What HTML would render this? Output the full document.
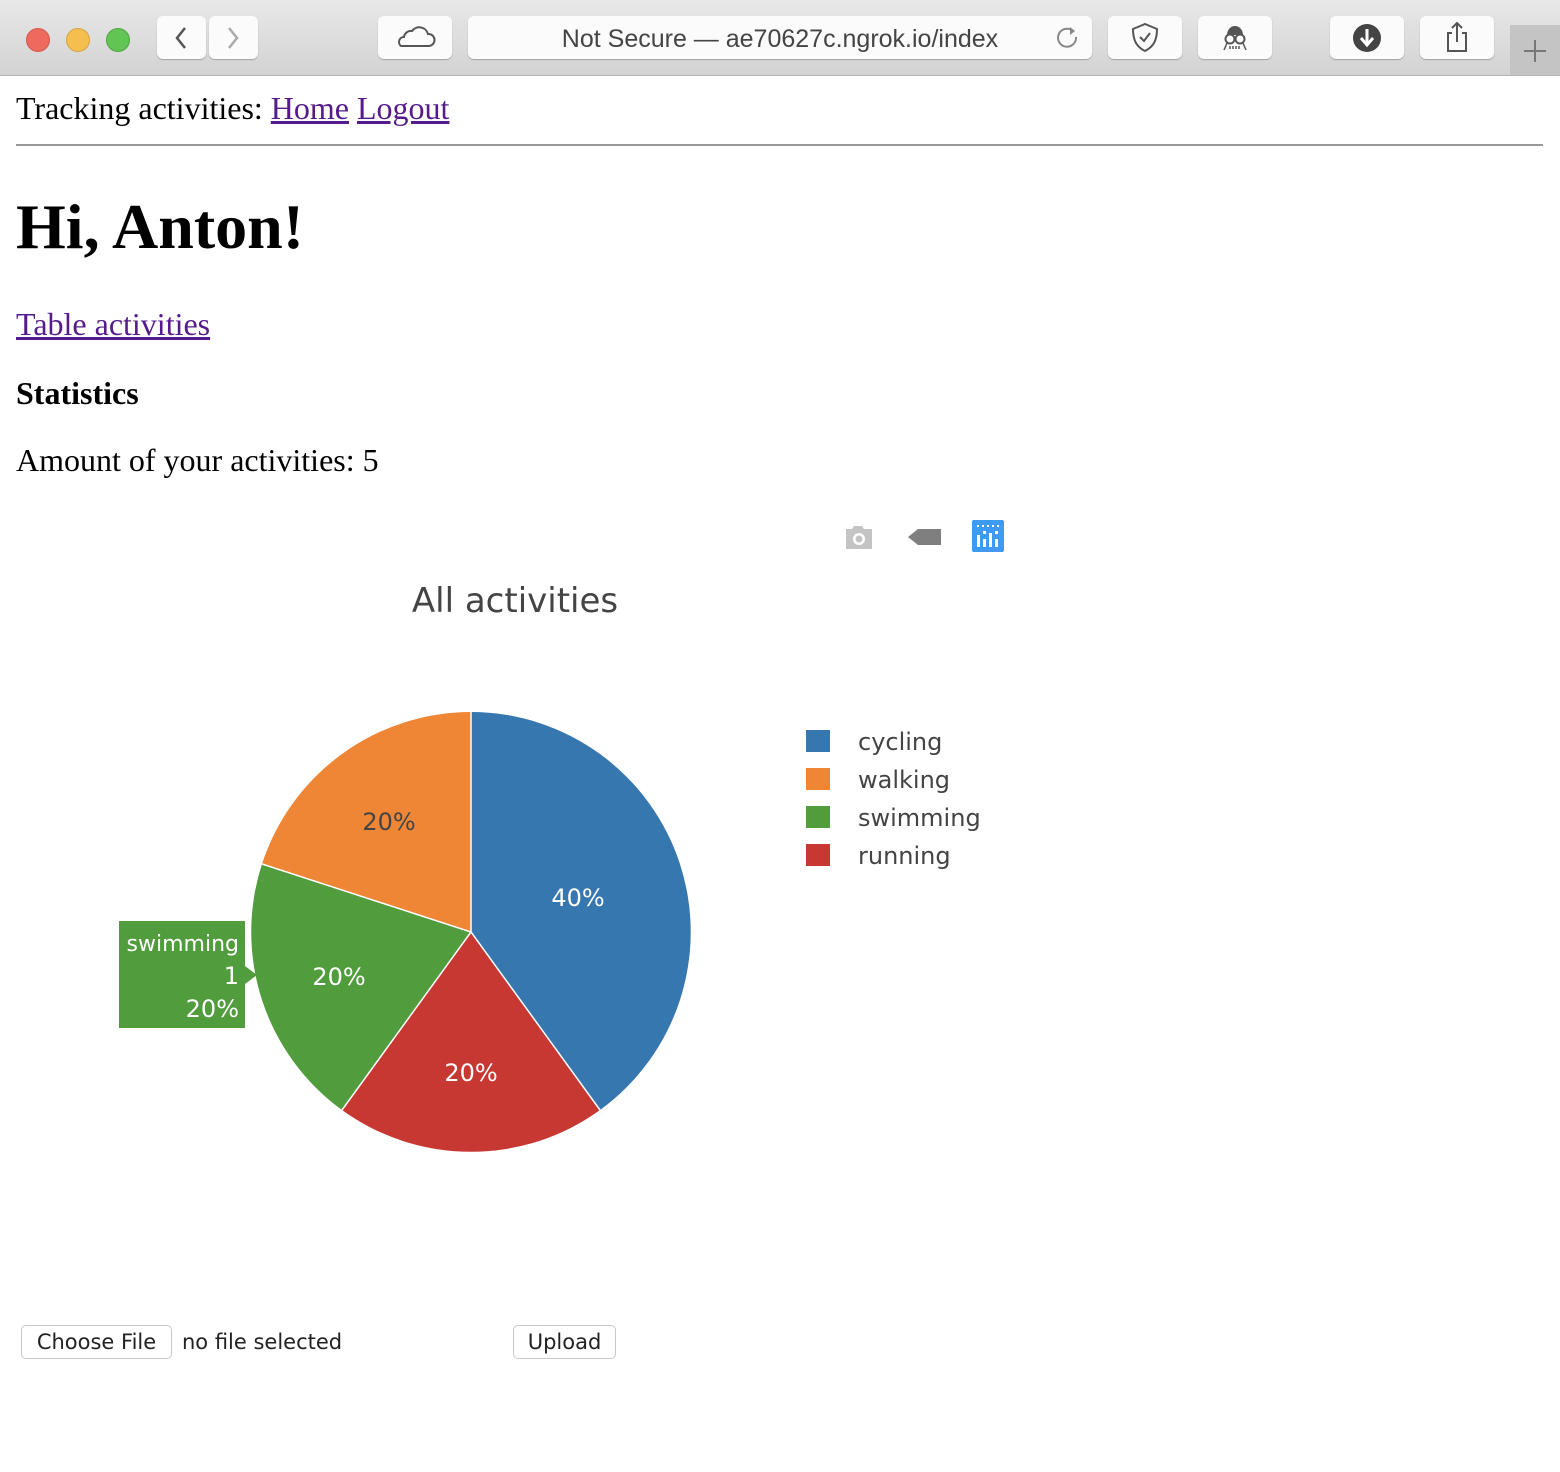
<!DOCTYPE html>
<html><head><style>
body{margin:0;width:1560px;height:1472px;background:#fff;position:relative;overflow:hidden;font-family:"Liberation Serif",serif}
.tb{position:absolute;left:0;top:0;width:1560px;height:75px;background:linear-gradient(#e8e8e8,#d3d3d3);border-bottom:1px solid #b5b5b5}
.btn{position:absolute;top:16px;height:43px;background:#fbfbfb;border-radius:6px;box-shadow:0 1px 1px rgba(0,0,0,.25)}
.dot{position:absolute;top:28px;width:24px;height:24px;border-radius:50%}
.s{font-family:"DejaVu Sans",sans-serif}
a{color:#551a8b}
</style></head><body>
<div class="tb">
<div class="dot" style="left:26px;background:#ee6a5e;border:1px solid #d5574c;width:22px;height:22px"></div>
<div class="dot" style="left:66px;background:#f5bf4f;border:1px solid #d9a33c;width:22px;height:22px"></div>
<div class="dot" style="left:106px;background:#61c454;border:1px solid #4ea83f;width:22px;height:22px"></div>
<div class="btn" style="left:157px;width:49px"><svg width="49" height="43"><path d="M28 12 L20 22 L28 32" stroke="#555" stroke-width="2.5" fill="none"/></svg></div>
<div class="btn" style="left:209px;width:49px"><svg width="49" height="43"><path d="M20 12 L28 22 L20 32" stroke="#aaa" stroke-width="2.5" fill="none"/></svg></div>
<div class="btn" style="left:378px;width:74px"><svg width="74" height="43"><path d="M23 30 H51 A6 6 0 0 0 50 18 A9 9 0 0 0 34 15 A7 7 0 0 0 26 21 A5 5 0 0 0 23 30Z" stroke="#555" stroke-width="2" fill="none"/></svg></div>
<div class="btn" style="left:468px;width:624px"><div style="position:absolute;left:0;right:0;top:9px;text-align:center;font-family:'Liberation Sans',sans-serif;font-size:25px;color:#444">Not Secure — ae70627c.ngrok.io/index</div><svg style="position:absolute;right:10px;top:8px" width="28" height="28"><path d="M19 7 A9 9 0 1 0 22 13" stroke="#888" stroke-width="2" fill="none"/><path d="M16 3 L21 7 L16 11" fill="#888"/></svg></div>
<div class="btn" style="left:1108px;width:74px"><svg width="74" height="43"><path d="M37 8 L49 13 C49 25 45 31 37 35 C29 31 25 25 25 13Z" stroke="#555" stroke-width="2" fill="none"/><path d="M32 21 L36 25 L42 17" stroke="#555" stroke-width="2" fill="none"/></svg></div>
<div class="btn" style="left:1198px;width:74px"><svg width="74" height="43"><path d="M29 19 A8 9 0 0 1 45 19Z" fill="#555"/><circle cx="32" cy="23" r="4.5" stroke="#555" stroke-width="2" fill="none"/><circle cx="42" cy="23" r="4.5" stroke="#555" stroke-width="2" fill="none"/><path d="M26 34 L29 27 M48 34 L45 27 M32 33V30M35 33V30M38 33V30M41 33V30" stroke="#555" stroke-width="1.5"/></svg></div>
<div class="btn" style="left:1330px;width:74px"><svg width="74" height="43"><circle cx="37" cy="22" r="14" fill="#444"/><path d="M37 13V28 M31 22 L37 29 L43 22" stroke="#fff" stroke-width="3" fill="none"/></svg></div>
<div class="btn" style="left:1420px;width:74px"><svg width="74" height="43"><path d="M32 17 H28 V35 H46 V17 H42" stroke="#555" stroke-width="2" fill="none"/><path d="M37 26V7 M32 12 L37 7 L42 12" stroke="#555" stroke-width="2" fill="none"/></svg></div>
<div style="position:absolute;left:1510px;top:25px;width:50px;height:50px;background:#c4c4c4"><svg width="50" height="50"><path d="M25 15V37 M14 26H36" stroke="#777" stroke-width="2"/></svg></div>
</div>

<div style="position:absolute;left:16px;top:90px;font-size:32px">Tracking activities: <a href="#">Home</a> <a href="#">Logout</a></div>
<div style="position:absolute;left:16px;top:144px;width:1527px;height:2px;background:#999"></div>
<div style="position:absolute;left:16px;top:190px;font-size:64px;font-weight:bold">Hi, Anton!</div>
<div style="position:absolute;left:16px;top:306px;font-size:32px"><a href="#">Table activities</a></div>
<div style="position:absolute;left:16px;top:375px;font-size:32px;font-weight:bold">Statistics</div>
<div style="position:absolute;left:16px;top:442px;font-size:32px">Amount of your activities: 5</div>

<svg style="position:absolute;left:0;top:500px" width="1100" height="700" class="s">
<g transform="translate(0,-500)">
<path d="M846 529 h6 l2 -3 h8 l2 3 h8 v20 h-26z" fill="#c4c4c4"/><circle cx="859" cy="539" r="6" fill="#fff"/><circle cx="859" cy="539" r="3.5" fill="#c4c4c4"/>
<path d="M908 537 L918 529 H941 V545 H918Z" fill="#7f7f7f"/>
<rect x="972" y="520" width="32" height="32" rx="2" fill="#3d9bf1"/>
<g fill="#fff"><rect x="977" y="535" width="3" height="12"/><rect x="983" y="539" width="3" height="8"/><rect x="989" y="533" width="3" height="14"/><rect x="995" y="539" width="3" height="8"/><rect x="977" y="525" width="2" height="2"/><rect x="982" y="525" width="2" height="2"/><rect x="987" y="525" width="2" height="2"/><rect x="992" y="525" width="2" height="2"/><rect x="997" y="525" width="2" height="2"/><rect x="983" y="531" width="3" height="3"/><rect x="995" y="531" width="3" height="3"/></g>
<text x="515" y="612" font-size="34" fill="#444" text-anchor="middle">All activities</text>
<path d="M471 932 L471 712 A220 220 0 0 1 600 1110Z" fill="#3777af"/>
<path d="M471 932 L600 1110 A220 220 0 0 1 342 1110Z" fill="#c73833"/>
<path d="M471 932 L342 1110 A220 220 0 0 1 262 864Z" fill="#519c3d"/>
<path d="M471 932 L262 864 A220 220 0 0 1 471 712Z" fill="#ef8636"/>
<g stroke="#fff" stroke-width="1.5" fill="none"><path d="M471 712V932L600 1110M342 1110L471 932L262 864"/></g>
<text x="578" y="906" font-size="24" fill="#fff" text-anchor="middle">40%</text>
<text x="389" y="830" font-size="24" fill="#444" text-anchor="middle">20%</text>
<text x="339" y="985" font-size="24" fill="#fff" text-anchor="middle">20%</text>
<text x="471" y="1081" font-size="24" fill="#fff" text-anchor="middle">20%</text>
<path d="M119 921 H245 V966 L257 975 L245 984 V1028 H119Z" fill="#519c3d"/>
<text x="239" y="951" font-size="22" fill="#fff" text-anchor="end">swimming</text>
<text x="239" y="984" font-size="24" fill="#fff" text-anchor="end">1</text>
<text x="239" y="1017" font-size="24" fill="#fff" text-anchor="end">20%</text>
<rect x="806" y="730" width="24" height="22" fill="#3777af"/>
<rect x="806" y="768" width="24" height="22" fill="#ef8636"/>
<rect x="806" y="806" width="24" height="22" fill="#519c3d"/>
<rect x="806" y="844" width="24" height="22" fill="#c73833"/>
<g font-size="24" fill="#444"><text x="858" y="750">cycling</text><text x="858" y="788">walking</text><text x="858" y="826">swimming</text><text x="858" y="864">running</text></g>
</g></svg>

<div style="position:absolute;left:21px;top:1325px;width:149px;height:32px;border:1px solid #c8c8c8;border-radius:5px;font-family:'DejaVu Sans',sans-serif;font-size:21px;color:#222;text-align:center;line-height:32px">Choose File</div>
<div style="position:absolute;left:182px;top:1325px;font-family:'DejaVu Sans',sans-serif;font-size:21px;color:#222;line-height:34px">no file selected</div>
<div style="position:absolute;left:513px;top:1325px;width:101px;height:32px;border:1px solid #c8c8c8;border-radius:5px;font-family:'DejaVu Sans',sans-serif;font-size:21px;color:#222;text-align:center;line-height:32px">Upload</div>
</body></html>
